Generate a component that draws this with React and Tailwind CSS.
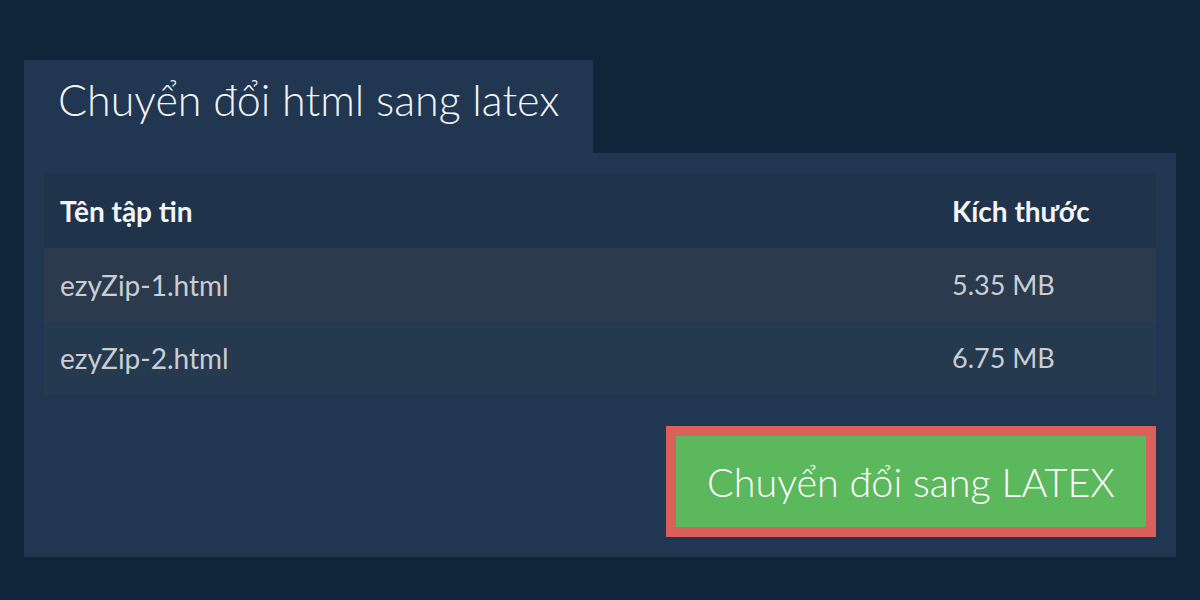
import React from 'react';

const files = [
  { name: 'ezyZip-1.html', size: '5.35 MB' },
  { name: 'ezyZip-2.html', size: '6.75 MB' },
];

function App() {
  return (
    <div className="min-h-[600px] bg-[#10243a] px-6 pt-[60px] font-['Lato','Liberation_Sans',sans-serif]">
      {/* Tab title */}
      <div className="flex h-[93px] w-[569px] items-center bg-[#213650] pb-[14px] pl-[34px]">
        <h1 className="text-[43px] font-light leading-none text-[#f2f4f6]">Chuyển đổi html sang latex</h1>
      </div>

      {/* Panel */}
      <div className="bg-[#213650] px-5 pt-[21px] pb-5">
        <table className="w-full border-collapse text-left">
          <thead>
            <tr className="h-[74px] bg-[#1f334a]">
              <th className="pl-4 text-[28px] font-bold text-[#f2f4f6]">Tên tập tin</th>
              <th className="w-[204px] text-[28px] font-bold text-[#f2f4f6]">Kích thước</th>
            </tr>
          </thead>
          <tbody>
            {files.map((f, i) => (
              <tr key={f.name} className={i === 0 ? 'h-[74px] bg-[#2b3b4d]' : 'h-[72px] bg-[#25394f]'}>
                <td className="pl-4 text-[28px] text-[#c9ced4]">{f.name}</td>
                <td className="text-[27px] text-[#c9ced4]">{f.size}</td>
              </tr>
            ))}
          </tbody>
        </table>

        <div className="mt-8 flex justify-end">
          <button className="h-[111px] w-[490px] border-[10px] border-[#d9605b] bg-[#5cb85c] text-[39.5px] font-light text-white">
            Chuyển đổi sang LATEX
          </button>
        </div>
      </div>
    </div>
  );
}

export default App;
